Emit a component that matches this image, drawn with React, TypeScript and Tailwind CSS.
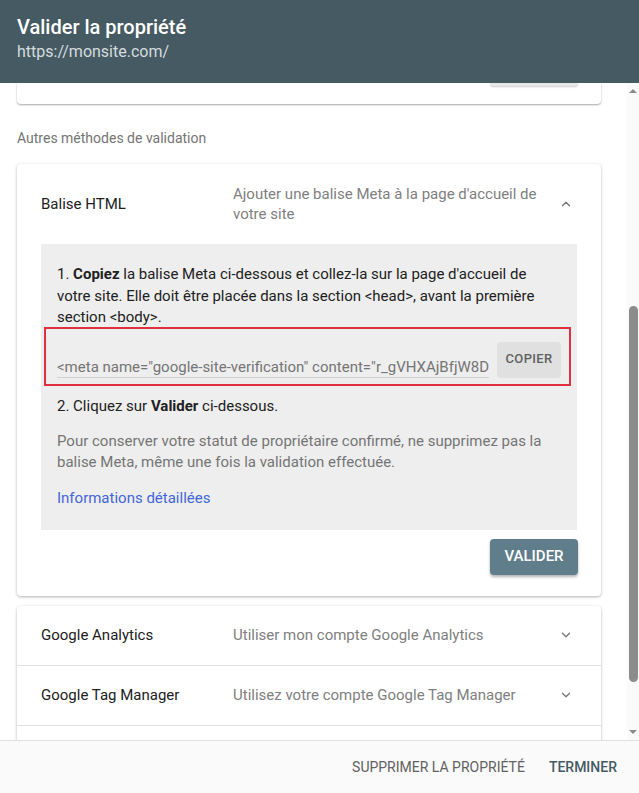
import { ReactNode } from 'react';

const FONT = "[font-family:Roboto,'Liberation_Sans',sans-serif]";

function Chevron({ up = false }: { up?: boolean }) {
  return (
    <svg width="14" height="14" viewBox="0 0 24 24" className="text-[#757575]">
      <path
        d={up ? 'M6 15l6-6 6 6' : 'M6 9l6 6 6-6'}
        fill="none"
        stroke="currentColor"
        strokeWidth="2.2"
        strokeLinecap="round"
        strokeLinejoin="round"
      />
    </svg>
  );
}

function MethodRow({ title, description, last = false }: { title?: string; description?: ReactNode; last?: boolean }) {
  return (
    <div className={`flex items-center h-[60px] pl-6 pr-7 ${last ? '' : 'border-b border-[#e0e0e0]'}`}>
      <div className="w-[192px] text-[15px] text-[#212121]">{title}</div>
      <div className="flex-1 text-[15px] text-[#808080]">{description}</div>
      {title && <Chevron />}
    </div>
  );
}

export default function App() {
  return (
    <div className={`w-[639px] h-[793px] flex flex-col bg-white overflow-hidden ${FONT}`}>
      {/* dialog header */}
      <header className="h-[83px] shrink-0 bg-[#465a63] pl-[17px] pt-[13px]">
        <h1 className="text-[20px] leading-[28px] font-medium text-white">Valider la propriété</h1>
        <div className="text-[16px] leading-[22px] text-[#d5dcdf]">https://monsite.com/</div>
      </header>

      <div className="flex-1 flex min-h-0">
        <main className="flex-1 min-w-0 overflow-hidden">
          {/* end of the recommended method card, scrolled out of view */}
          <div className="ml-[17px] w-[584px] h-[21px] bg-white rounded-b shadow-[0_1px_2px_rgba(0,0,0,0.35)] flex justify-end pr-[23px]">
            <div className="w-[88px] h-[3px] bg-[#e8e8e8] rounded-b shadow-[0_1px_2px_rgba(0,0,0,0.2)]" />
          </div>

          <p className="mt-6 ml-[17px] text-[14px] leading-[20px] text-[#757575]">Autres méthodes de validation</p>

          {/* Balise HTML, expanded */}
          <section className="mt-4 ml-[17px] w-[584px] bg-white rounded shadow-[0_1px_3px_rgba(0,0,0,0.3)] pb-[21px]">
            <div className="flex items-center h-[80px] pl-6 pr-7">
              <div className="w-[192px] text-[15px] text-[#212121]">Balise HTML</div>
              <div className="flex-1 text-[15px] leading-[20px] text-[#808080] pr-3">
                Ajouter une balise Meta à la page d'accueil de votre site
              </div>
              <Chevron up />
            </div>

            <div className="mx-6 bg-[#eeeeee] px-4 pt-5 pb-[22px] text-[15px] leading-[21.5px] text-[#212121]">
              <p>
                1. <b className="font-bold">Copiez</b> la balise Meta ci-dessous et collez-la sur la page d'accueil de
                votre site. Elle doit être placée dans la section &lt;head&gt;, avant la première section &lt;body&gt;.
              </p>

              <div className="-mt-[2px] -ml-[13px] -mr-[10px] border-2 border-[#e0303f] flex items-end gap-2 pl-[11px] pr-[8px] pt-[13px] pb-[6px]">
                <div className="flex-1 min-w-0 border-b border-[#cfcfcf] leading-[20px] text-[#757575] whitespace-nowrap overflow-hidden">
                  &lt;meta name="google-site-verification" content="r_gVHXAjBfjW8D3kPq0sLm2nZx7yT" /&gt;
                </div>
                <button className="w-[64px] h-[36px] shrink-0 rounded bg-[#e0e0e0] text-[13px] font-medium tracking-wide text-[#616161] pb-[2px]">
                  COPIER
                </button>
              </div>

              <p className="mt-[10px] leading-[20px]">
                2. Cliquez sur <b className="font-bold">Valider</b> ci-dessous.
              </p>
              <p className="mt-[15px] text-[#757575]">
                Pour conserver votre statut de propriétaire confirmé, ne supprimez pas la balise Meta, même une fois la
                validation effectuée.
              </p>
              <a className="block mt-[14px] leading-[20px] text-[#4366d9]">Informations détaillées</a>
            </div>

            <div className="flex justify-end mr-[23px] mt-[9px]">
              <button className="w-[88px] h-[36px] rounded bg-[#607d8b] text-white text-[15px] font-medium shadow-[0_2px_3px_rgba(0,0,0,0.3)]">
                VALIDER
              </button>
            </div>
          </section>

          {/* collapsed methods */}
          <section className="mt-[10px] ml-[17px] w-[584px] bg-white rounded-t shadow-[0_1px_3px_rgba(0,0,0,0.3)]">
            <MethodRow title="Google Analytics" description="Utiliser mon compte Google Analytics" />
            <MethodRow title="Google Tag Manager" description="Utilisez votre compte Google Tag Manager" />
            <MethodRow last />
          </section>
        </main>

        {/* scrollbar */}
        <div className="w-[12px] shrink-0 bg-[#fafafa] flex flex-col items-center">
          <div className="mt-[6px] w-0 h-0 border-x-[4px] border-x-transparent border-b-[4px] border-b-[#8a8a8a]" />
          <div className="mt-[213px] w-[9px] h-[376px] rounded-full bg-[#8c8c8c]" />
          <div className="mt-auto mb-[6px] w-0 h-0 border-x-[4px] border-x-transparent border-t-[4px] border-t-[#8a8a8a]" />
        </div>
      </div>

      {/* dialog actions */}
      <footer className="h-[53px] shrink-0 bg-[#fafafa] border-t border-[#e0e0e0] flex items-center justify-end gap-6 pr-[22px]">
        <button className="text-[14px] text-[#616161]">SUPPRIMER LA PROPRIÉTÉ</button>
        <button className="text-[14px] font-medium text-[#455a64]">TERMINER</button>
      </footer>
    </div>
  );
}
